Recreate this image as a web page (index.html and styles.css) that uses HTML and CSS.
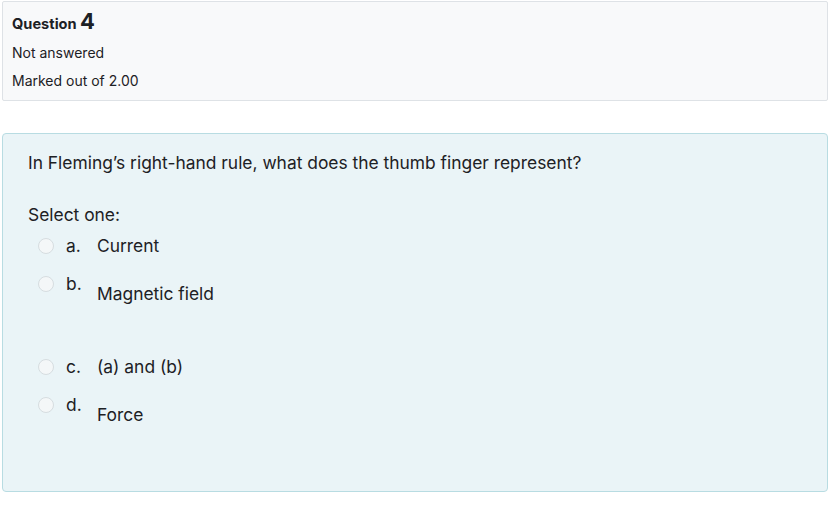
FILE: index.html
```html
<!DOCTYPE html>
<html>
<head>
<meta charset="utf-8">
<link rel="stylesheet" href="styles.css">
</head>
<body>
<div class="page">
  <div class="info">
    <h3 class="qno">Question <span class="num">4</span></h3>
    <div class="state">Not answered</div>
    <div class="grade">Marked out of 2.00</div>
  </div>
  <div class="content">
    <div class="qtext">In Fleming’s right-hand rule, what does the thumb finger represent?</div>
    <div class="prompt">Select one:</div>
    <div class="answers">
      <div class="opt">
        <span class="radio"></span>
        <span class="letter">a.</span>
        <span class="text">Current</span>
      </div>
      <div class="opt tall">
        <span class="radio"></span>
        <span class="letter">b.</span>
        <div class="text"><p>Magnetic field</p></div>
      </div>
      <div class="opt">
        <span class="radio"></span>
        <span class="letter">c.</span>
        <span class="text">(a) and (b)</span>
      </div>
      <div class="opt tall">
        <span class="radio"></span>
        <span class="letter">d.</span>
        <div class="text"><p>Force</p></div>
      </div>
    </div>
  </div>
</div>
</body>
</html>
```

FILE: styles.css
```css
html, body {
  margin: 0;
  padding: 0;
  background: #ffffff;
}
body {
  font-family: Inter, "Liberation Sans", Arial, sans-serif;
  color: #1d2125;
}
.page {
  width: 826px;
  padding: 1px 0 0 2px;
}
.info {
  background: #f8f9fa;
  border: 1px solid #dee2e6;
  border-radius: 2px;
  padding: 7px 9px 9px 9px;
  height: 82px;
}
.qno {
  margin: 0;
  font-size: 14.6px;
  font-weight: 700;
  line-height: 24px;
}
.qno .num {
  font-size: 22px;
}
.state, .grade {
  font-size: 14px;
  line-height: 20px;
}
.state {
  margin-top: 7px;
}
.grade {
  margin-top: 8px;
}
.content {
  margin-top: 32px;
  background: #eaf4f7;
  border: 1px solid #b8dce2;
  border-radius: 4px;
  padding: 16px 25px;
  height: 325px;
}
.qtext {
  font-size: 17.4px;
  line-height: 26px;
}
.prompt {
  font-size: 17.4px;
  line-height: 26px;
  margin-top: 26px;
}
.answers {
  padding-left: 10px;
}
.opt {
  display: flex;
  align-items: flex-start;
  font-size: 17.4px;
  line-height: 26px;
  margin-top: 12px;
}
.opt:first-child {
  margin-top: 5px;
}
.radio {
  width: 14px;
  height: 14px;
  border: 1px solid #d6dde0;
  border-radius: 50%;
  background: #f4f7f8;
  margin: 5px 12px 0 0;
  flex: none;
}
.letter {
  width: 31px;
  flex: none;
}
.text p {
  margin: 10px 0 35px;
}
```
